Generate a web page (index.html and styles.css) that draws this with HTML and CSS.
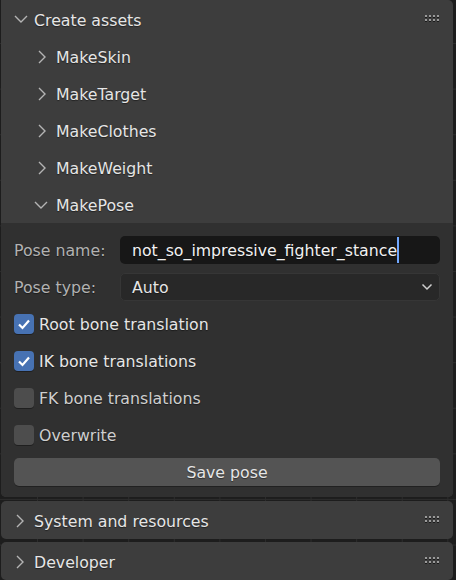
FILE: index.html
```html
<!DOCTYPE html>
<html>
<head>
<meta charset="utf-8">
<link rel="stylesheet" href="styles.css">
</head>
<body>
<div class="stack">
  <section class="panel">
    <div class="header">
      <svg class="chev-down" width="14" height="8" viewBox="0 0 14 8"><path d="M1 1 L7 7 L13 1" fill="none" stroke="#b4b4b4" stroke-width="1.4"/></svg>
      <span class="title">Create assets</span>
      <svg class="grip" width="16" height="8" viewBox="0 0 16 8"><g fill="#1a1a1a"><rect x="0" y="1" width="2" height="2"/><rect x="4" y="1" width="2" height="2"/><rect x="8" y="1" width="2" height="2"/><rect x="12" y="1" width="2" height="2"/><rect x="0" y="5" width="2" height="2"/><rect x="4" y="5" width="2" height="2"/><rect x="8" y="5" width="2" height="2"/><rect x="12" y="5" width="2" height="2"/></g><g fill="#9a9a9a"><rect x="0" y="0" width="2" height="2"/><rect x="4" y="0" width="2" height="2"/><rect x="8" y="0" width="2" height="2"/><rect x="12" y="0" width="2" height="2"/><rect x="0" y="4" width="2" height="2"/><rect x="4" y="4" width="2" height="2"/><rect x="8" y="4" width="2" height="2"/><rect x="12" y="4" width="2" height="2"/></g></svg>
    </div>
    <div class="sub">
      <svg class="chev-right" width="8" height="14" viewBox="0 0 8 14"><path d="M1 1 L7 7 L1 13" fill="none" stroke="#b4b4b4" stroke-width="1.4"/></svg>
      <span>MakeSkin</span>
    </div>
    <div class="sub">
      <svg class="chev-right" width="8" height="14" viewBox="0 0 8 14"><path d="M1 1 L7 7 L1 13" fill="none" stroke="#b4b4b4" stroke-width="1.4"/></svg>
      <span>MakeTarget</span>
    </div>
    <div class="sub">
      <svg class="chev-right" width="8" height="14" viewBox="0 0 8 14"><path d="M1 1 L7 7 L1 13" fill="none" stroke="#b4b4b4" stroke-width="1.4"/></svg>
      <span>MakeClothes</span>
    </div>
    <div class="sub">
      <svg class="chev-right" width="8" height="14" viewBox="0 0 8 14"><path d="M1 1 L7 7 L1 13" fill="none" stroke="#b4b4b4" stroke-width="1.4"/></svg>
      <span>MakeWeight</span>
    </div>
    <div class="sub">
      <svg class="chev-down sub-chev" width="14" height="8" viewBox="0 0 14 8"><path d="M1 1 L7 7 L13 1" fill="none" stroke="#b4b4b4" stroke-width="1.4"/></svg>
      <span>MakePose</span>
    </div>
    <div class="body">
      <div class="row">
        <span class="label">Pose name:</span>
        <div class="field text-field"><span>not_so_impressive_fighter_stance</span><span class="cursor"></span></div>
      </div>
      <div class="row">
        <span class="label">Pose type:</span>
        <div class="field dropdown"><span>Auto</span>
          <svg width="12" height="8" viewBox="0 0 12 8"><path d="M1.5 1.5 L6 6 L10.5 1.5" fill="none" stroke="#d0d0d0" stroke-width="1.5"/></svg>
        </div>
      </div>
      <label class="check-row">
        <span class="box on"><svg width="14" height="12" viewBox="0 0 14 12"><path d="M2 6.5 L5.5 10 L12 2.5" fill="none" stroke="#fff" stroke-width="2.2"/></svg></span>
        <span class="check-label">Root bone translation</span>
      </label>
      <label class="check-row">
        <span class="box on"><svg width="14" height="12" viewBox="0 0 14 12"><path d="M2 6.5 L5.5 10 L12 2.5" fill="none" stroke="#fff" stroke-width="2.2"/></svg></span>
        <span class="check-label">IK bone translations</span>
      </label>
      <label class="check-row">
        <span class="box"></span>
        <span class="check-label dim">FK bone translations</span>
      </label>
      <label class="check-row">
        <span class="box"></span>
        <span class="check-label dim">Overwrite</span>
      </label>
      <div class="button">Save pose</div>
    </div>
  </section>
  <section class="panel closed">
    <div class="header">
      <svg class="chev-right" width="8" height="14" viewBox="0 0 8 14"><path d="M1 1 L7 7 L1 13" fill="none" stroke="#b4b4b4" stroke-width="1.4"/></svg>
      <span class="title">System and resources</span>
      <svg class="grip" width="16" height="8" viewBox="0 0 16 8"><g fill="#1a1a1a"><rect x="0" y="1" width="2" height="2"/><rect x="4" y="1" width="2" height="2"/><rect x="8" y="1" width="2" height="2"/><rect x="12" y="1" width="2" height="2"/><rect x="0" y="5" width="2" height="2"/><rect x="4" y="5" width="2" height="2"/><rect x="8" y="5" width="2" height="2"/><rect x="12" y="5" width="2" height="2"/></g><g fill="#9a9a9a"><rect x="0" y="0" width="2" height="2"/><rect x="4" y="0" width="2" height="2"/><rect x="8" y="0" width="2" height="2"/><rect x="12" y="0" width="2" height="2"/><rect x="0" y="4" width="2" height="2"/><rect x="4" y="4" width="2" height="2"/><rect x="8" y="4" width="2" height="2"/><rect x="12" y="4" width="2" height="2"/></g></svg>
    </div>
  </section>
  <section class="panel closed">
    <div class="header">
      <svg class="chev-right" width="8" height="14" viewBox="0 0 8 14"><path d="M1 1 L7 7 L1 13" fill="none" stroke="#b4b4b4" stroke-width="1.4"/></svg>
      <span class="title">Developer</span>
      <svg class="grip" width="16" height="8" viewBox="0 0 16 8"><g fill="#1a1a1a"><rect x="0" y="1" width="2" height="2"/><rect x="4" y="1" width="2" height="2"/><rect x="8" y="1" width="2" height="2"/><rect x="12" y="1" width="2" height="2"/><rect x="0" y="5" width="2" height="2"/><rect x="4" y="5" width="2" height="2"/><rect x="8" y="5" width="2" height="2"/><rect x="12" y="5" width="2" height="2"/></g><g fill="#9a9a9a"><rect x="0" y="0" width="2" height="2"/><rect x="4" y="0" width="2" height="2"/><rect x="8" y="0" width="2" height="2"/><rect x="12" y="0" width="2" height="2"/><rect x="0" y="4" width="2" height="2"/><rect x="4" y="4" width="2" height="2"/><rect x="8" y="4" width="2" height="2"/><rect x="12" y="4" width="2" height="2"/></g></svg>
    </div>
  </section>
</div>
</body>
</html>
```
FILE: styles.css
```css
html, body {
  margin: 0;
  padding: 0;
  height: 100%;
  overflow: hidden;
}
body {
  background-color: #1d1d1d;
  background-image:
    linear-gradient(to right, #2c2c2c 1px, transparent 1px),
    linear-gradient(to bottom, #2c2c2c 1px, transparent 1px);
  background-size: 45.6px 45.6px;
  background-position: 37px 43px;
  font-family: "DejaVu Sans", sans-serif;
  font-size: 15.75px;
  color: #e6e6e6;
}
.stack {
  display: flex;
  flex-direction: column;
  padding: 0 3px 0 1px;
}
.panel {
  background: #3d3d3d;
  border-radius: 0 5px 5px 5px;
  overflow: hidden;
  text-shadow: 0 1px 1px rgba(0,0,0,0.45);
}
.panel.closed {
  border-radius: 5px;
  margin-top: 3px;
}
.panel.closed:nth-child(2) {
  margin-top: 4px;
}
.header {
  height: 38px;
  box-sizing: border-box;
  padding: 2px 12px 0 13px;
  display: flex;
  align-items: center;
}
.closed .header {
  padding-left: 15px;
}
.closed .header .chev-right {
  margin-right: 10px;
}
.chev-down {
  margin-right: 6px;
  margin-top: -2px;
  flex: none;
}
.chev-right {
  flex: none;
  margin-top: -1px;
}
.title {
  flex: 1;
}
.grip {
  flex: none;
  margin-top: -2px;
}
.sub {
  height: 37px;
  box-sizing: border-box;
  padding: 2px 0 0 37px;
  display: flex;
  align-items: center;
}
.sub .chev-right {
  margin-right: 10px;
}
.sub .sub-chev {
  margin-left: -4px;
  margin-right: 8px;
}
.body {
  background: #303030;
  padding: 13px 13px 11px 13px;
  display: flex;
  flex-direction: column;
  gap: 9px;
}
.row {
  height: 28px;
  display: flex;
  align-items: center;
}
.label {
  width: 106px;
  box-sizing: border-box;
  color: #b2b2b2;
  flex: none;
}
.field {
  flex: 1;
  height: 28px;
  border-radius: 5px;
  display: flex;
  align-items: center;
  padding: 0 6px 0 12px;
  box-sizing: border-box;
}
.text-field {
  background: #171717;
  color: #f2f2f2;
}
.cursor {
  width: 2px;
  height: 26px;
  background: #71a8ff;
  margin-left: 0;
}
.dropdown {
  background: #282828;
  border: 1px solid #363636;
  padding-left: 11px;
  justify-content: space-between;
}
.check-row {
  height: 28px;
  display: flex;
  align-items: center;
  gap: 5px;
}
.box {
  width: 20px;
  height: 20px;
  border-radius: 4px;
  background: #4d4d4d;
  display: flex;
  align-items: center;
  justify-content: center;
  box-shadow: 0 1px 0 rgba(0,0,0,0.35);
}
.box.on {
  background: #4772b3;
}
.check-label {
  color: #e6e6e6;
}
.check-label.dim {
  color: #cfcfcf;
}
.button {
  height: 28px;
  background: #545454;
  border-radius: 5px;
  display: flex;
  align-items: center;
  justify-content: center;
  color: #e6e6e6;
  box-shadow: 0 1px 0 rgba(0,0,0,0.3);
}
```
